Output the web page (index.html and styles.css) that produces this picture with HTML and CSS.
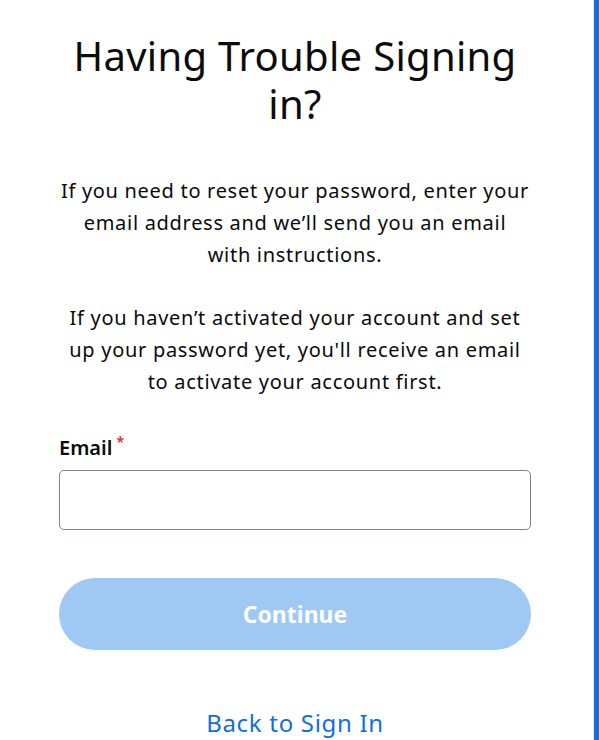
FILE: index.html
```html
<!DOCTYPE html>
<html lang="en">
<head>
<meta charset="utf-8">
<title>Having Trouble Signing in?</title>
<link rel="stylesheet" href="styles.css">
</head>
<body>
<div class="page">
  <main class="card">
    <h1 class="title">Having Trouble Signing in?</h1>
    <p class="text">If you need to reset your password, enter your email address and we’ll send you an email with&nbsp;instructions.</p>
    <p class="text">If you haven’t activated your account and set up your password yet, you'll receive an email to activate your account first.</p>
    <form class="form">
      <label class="label" for="email">Email<span class="req">*</span></label>
      <input class="input" id="email" type="email">
      <button class="btn" type="button" disabled>Continue</button>
    </form>
    <a class="back" href="#">Back to Sign In</a>
  </main>
  <div class="edge"></div>
</div>
</body>
</html>
```

FILE: styles.css
```css
html, body {
  margin: 0;
  padding: 0;
  background: #ffffff;
}
body {
  font-family: "Noto Sans", "Open Sans", sans-serif;
  color: #0b0b0b;
}
.page {
  display: flex;
  min-height: 100vh;
}
.card {
  width: 472px;
  margin-left: 59px;
  display: flex;
  flex-direction: column;
  align-items: stretch;
  text-align: center;
}
.title {
  margin: 32px 0 0;
  font-size: 40px;
  line-height: 48px;
  font-weight: 400;
  letter-spacing: 0.3px;
}
.text {
  margin: 47px 0 0;
  font-size: 20px;
  line-height: 32px;
  letter-spacing: 0.7px;
}
.text + .text {
  margin-top: 31px;
}
.form {
  display: flex;
  flex-direction: column;
  margin-top: 37px;
}
.label {
  text-align: left;
  font-size: 20px;
  font-weight: 600;
  line-height: 26px;
}
.req {
  color: #e3271b;
  font-size: 14px;
  vertical-align: top;
  margin-left: 4px;
  position: relative;
  top: -6px;
}
.input {
  margin-top: 9px;
  height: 60px;
  box-sizing: border-box;
  border: 1px solid #7b838c;
  border-radius: 5px;
  font-size: 18px;
  padding: 0 14px;
}
.btn {
  margin-top: 48px;
  height: 72px;
  border: none;
  border-radius: 36px;
  background: #9fc8f3;
  color: #ffffff;
  font-family: inherit;
  font-size: 23px;
  font-weight: 700;
}
.back {
  margin-top: 57px;
  color: #0f6fde;
  text-decoration: none;
  font-size: 24px;
  line-height: 32px;
  letter-spacing: 0.7px;
}
.edge {
  margin-left: auto;
  width: 5px;
  background: #0f6fde;
  border-left: 1px solid #dfe3e8;
}
```
